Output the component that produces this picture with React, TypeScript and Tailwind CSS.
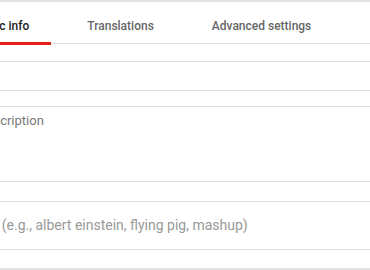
import { useState } from 'react';

const tabs = ['Basic info', 'Translations', 'Advanced settings'];

export default function App() {
  const [active, setActive] = useState(0);

  return (
    <div className="w-[370px] h-[270px] overflow-hidden bg-white font-['Roboto','Liberation_Sans',sans-serif]">
      <div className="h-[2px] bg-[#e3e3e3]" />
      <div className="-ml-[46px] w-[460px]">
        <div className="flex gap-[14px] h-[42px] border-b border-[#dedede]">
          {tabs.map((tab, i) => (
            <button
              key={tab}
              onClick={() => setActive(i)}
              className={`relative h-[42px] px-[22px] pt-[5px] text-[12px] leading-[14px] font-medium ${
                i === active ? 'text-[#222]' : 'text-[#666]'
              }`}
            >
              <span className="block">{tab}</span>
              {i === active && <span className="absolute left-0 right-0 bottom-[-1px] h-[3px] bg-[#e62117]" />}
            </button>
          ))}
        </div>

        <div className="mt-[17px] h-[30px] border-y border-[#dedede]" />

        <div className="mt-[15px] h-[76px] border-y border-[#dedede] pl-[24px] pt-[6px] text-[13px] leading-[16px] text-[#777]">
          Description
        </div>

        <div className="mt-[19px] h-[49px] border-y border-[#dedede] pl-[14px] flex items-center text-[14px] text-[#999]">
          Tags (e.g., albert einstein, flying pig, mashup)
        </div>
      </div>
      <div className="mt-[18px] h-[4px] bg-[#e3e3e3]" />
    </div>
  );
}
